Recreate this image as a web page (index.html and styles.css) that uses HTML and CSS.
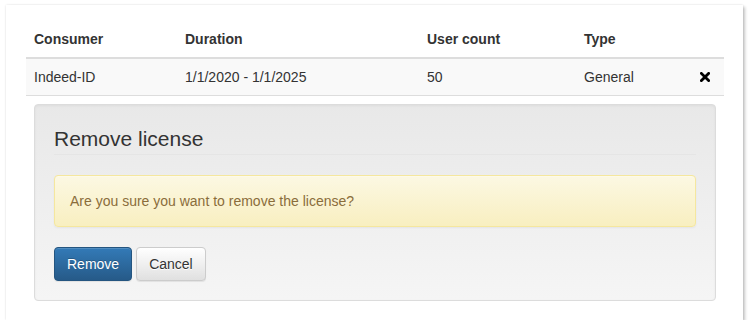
FILE: index.html
```html
<!DOCTYPE html>
<html lang="en">
<head>
  <meta charset="UTF-8">
  <title>Licenses</title>
  <link rel="stylesheet" href="styles.css">
</head>
<body>
  <!-- LICENSE CARD -->
  <div class="card">
    <table class="license-table">
      <thead>
        <tr>
          <th class="col-consumer">Consumer</th>
          <th class="col-duration">Duration</th>
          <th class="col-count">User count</th>
          <th class="col-type">Type</th>
          <th class="col-action"></th>
        </tr>
      </thead>
      <tbody>
        <tr class="striped">
          <td>Indeed-ID</td>
          <td>1/1/2020 - 1/1/2025</td>
          <td>50</td>
          <td>General</td>
          <td class="action">
            <svg class="icon-remove" width="10" height="10" viewBox="0 0 10 10">
              <path d="M1.4 1.4 L8.6 8.6 M8.6 1.4 L1.4 8.6" stroke="#000" stroke-width="2.8" stroke-linecap="square"/>
            </svg>
          </td>
        </tr>
        <tr>
          <td colspan="5">
            <!-- CONFIRM REMOVE -->
            <div class="well">
              <div class="well-title">Remove license</div>
              <div class="alert-warning">Are you sure you want to remove the license?</div>
              <div class="actions">
                <button class="btn btn-primary">Remove</button>
                <button class="btn btn-default">Cancel</button>
              </div>
            </div>
          </td>
        </tr>
      </tbody>
    </table>
  </div>
</body>
</html>
```

FILE: styles.css
```css
body {
  margin: 0;
  padding: 0;
  background: #fff;
  font-family: "Liberation Sans", Arial, sans-serif;
  font-size: 14px;
  line-height: 20px;
  color: #333;
}

/* CARD */
.card {
  width: 697px;
  margin: 5px 0 0 6px;
  padding: 16px 20px 11px 20px;
  background: #fff;
  box-shadow: 2px 2px 3px rgba(0, 0, 0, 0.22), 0 0 2px rgba(0, 0, 0, 0.12);
}

/* TABLE */
.license-table {
  width: 698px;
  border-collapse: collapse;
}

.license-table th {
  font-weight: bold;
  text-align: left;
  padding: 8px;
  border-bottom: 2px solid #ddd;
}

.license-table td {
  padding: 8px;
  vertical-align: top;
  border-top: 1px solid #ddd;
}

.license-table tbody tr:first-child td {
  border-top: 0;
}

.col-consumer { width: 135px; }
.col-duration { width: 226px; }
.col-count { width: 141px; }
.col-type { width: 98px; }
.col-action { width: 18px; }

.striped td {
  background: #f9f9f9;
}

.action {
  text-align: left;
}

.icon-remove {
  display: inline-block;
  vertical-align: middle;
  margin: -3px 0 0 2px;
}

/* WELL */
.well {
  padding: 19px;
  border: 1px solid #dcdcdc;
  border-radius: 4px;
  background-image: linear-gradient(to bottom, #e8e8e8 0, #f5f5f5 100%);
  box-shadow: inset 0 1px 3px rgba(0, 0, 0, 0.05), 0 1px 0 rgba(255, 255, 255, 0.1);
}

.well-title {
  font-size: 21px;
  line-height: 30px;
  margin-bottom: 20px;
  border-bottom: 1px solid #e5e5e5;
  color: #333;
}

.alert-warning {
  padding: 15px;
  margin-bottom: 20px;
  border: 1px solid #f5e79e;
  border-radius: 4px;
  color: #8a6d3b;
  background-image: linear-gradient(to bottom, #fcf8e3 0, #f8efc0 100%);
  box-shadow: inset 0 1px 0 rgba(255, 255, 255, 0.25), 0 1px 2px rgba(0, 0, 0, 0.05);
}

/* BUTTONS */
.actions {
  display: flex;
  gap: 4px;
}

.btn {
  font-family: inherit;
  font-size: 14px;
  line-height: 20px;
  padding: 6px 12px;
  border: 1px solid transparent;
  border-radius: 4px;
  cursor: pointer;
  box-shadow: inset 0 1px 0 rgba(255, 255, 255, 0.15), 0 1px 1px rgba(0, 0, 0, 0.075);
}

.btn-primary {
  color: #fff;
  border-color: #245580;
  text-shadow: 0 -1px 0 rgba(0, 0, 0, 0.2);
  background-image: linear-gradient(to bottom, #337ab7 0, #265a88 100%);
}

.btn-default {
  color: #333;
  border-color: #ccc;
  text-shadow: 0 1px 0 #fff;
  background-image: linear-gradient(to bottom, #fff 0, #e0e0e0 100%);
}
```
